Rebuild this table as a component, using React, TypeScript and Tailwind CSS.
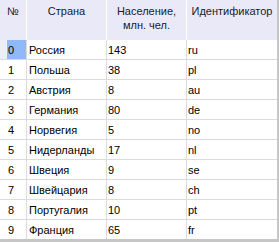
import React from 'react';

const rows: [string, string, string, string][] = [
  ['0', 'Россия', '143', 'ru'],
  ['1', 'Польша', '38', 'pl'],
  ['2', 'Австрия', '8', 'au'],
  ['3', 'Германия', '80', 'de'],
  ['4', 'Норвегия', '5', 'no'],
  ['5', 'Нидерланды', '17', 'nl'],
  ['6', 'Швеция', '9', 'se'],
  ['7', 'Швейцария', '8', 'ch'],
  ['8', 'Португалия', '10', 'pt'],
  ['9', 'Франция', '65', 'fr'],
];

export default function App() {
  return (
    <div className="w-[279px] h-[242px] overflow-hidden bg-white border-r-2 border-b-[3px] border-[#c6c6c6] text-[11px] leading-[14px] text-black [font-family:'Liberation_Sans',Arial,sans-serif]">
      {/* Заголовок */}
      <div className="grid grid-cols-[27px_80px_80px_90px] h-[40px] bg-[#e9e9f8] text-[#1a1a2e]">
        <div className="border-r border-white text-center pt-[4px]">№</div>
        <div className="border-r border-white text-center pt-[4px]">Страна</div>
        <div className="border-r border-white text-center pt-[4px]">
          Население,
          <br />
          млн. чел.
        </div>
        <div className="text-center pt-[4px]">Идентификатор</div>
      </div>

      {/* Строки */}
      {rows.map(([n, country, pop, id], i) => (
        <div
          key={n}
          className="grid grid-cols-[27px_80px_80px_90px] h-[20px] border-b border-[#dcdcdc] last:border-b-0"
        >
          <div className="flex border-r border-[#dcdcdc]">
            {i === 0 ? (
              <>
                <div className="w-[7px] bg-[#eeeef8]" />
                <div className="flex-1 bg-[#8fb9f8] pl-[1px] pt-[3px]">{n}</div>
              </>
            ) : (
              <div className="pl-[8px] pt-[3px]">{n}</div>
            )}
          </div>
          <div className="border-r border-[#dcdcdc] pl-[2px] pt-[3px] whitespace-nowrap">{country}</div>
          <div className="border-r border-[#dcdcdc] pl-[1px] pt-[3px]">{pop}</div>
          <div className="pl-[1px] pt-[3px]">{id}</div>
        </div>
      ))}
    </div>
  );
}
